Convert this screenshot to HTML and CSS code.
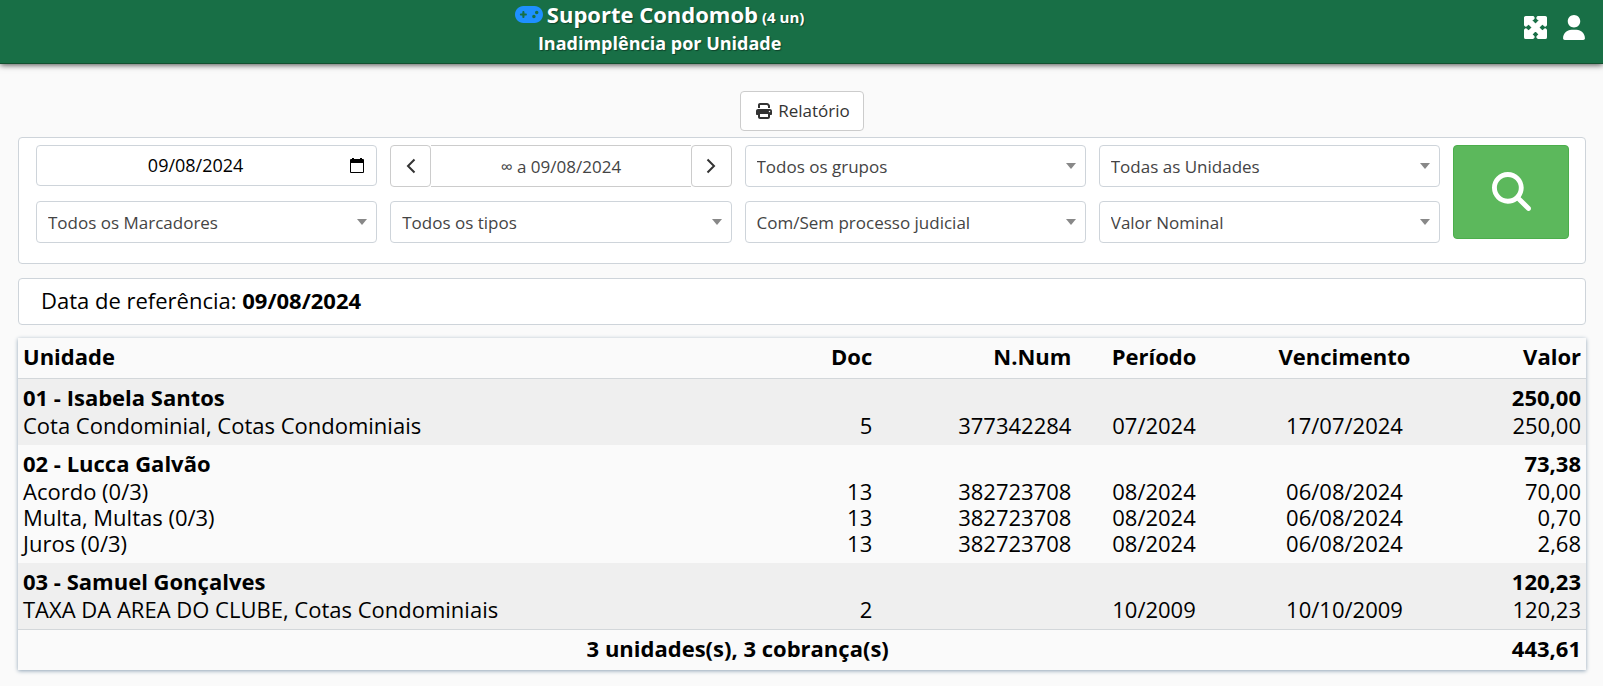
FILE: index.html
```html
<!DOCTYPE html>
<html lang="pt-BR">
<head>
<meta charset="utf-8">
<title>Inadimplência por Unidade</title>
<link rel="stylesheet" href="styles.css">
</head>
<body>
<header class="topbar">
  <div class="topbar-title">
    <h1 class="title">
      <svg class="icon-gamepad" viewBox="0 64 640 384" aria-hidden="true"><path d="M192 64C86 64 0 150 0 256S86 448 192 448H448c106 0 192-86 192-192s-86-192-192-192H192zM496 168a40 40 0 1 1 0 80 40 40 0 1 1 0-80zM392 304a40 40 0 1 1 80 0 40 40 0 1 1 -80 0zM168 200c0-13.3 10.7-24 24-24s24 10.7 24 24v32h32c13.3 0 24 10.7 24 24s-10.7 24-24 24H216v32c0 13.3-10.7 24-24 24s-24-10.7-24-24V280H136c-13.3 0-24-10.7-24-24s10.7-24 24-24h32V200z"/></svg>
      Suporte Condomob <small class="title-count">(4 un)</small>
    </h1>
    <h2 class="subtitle">Inadimplência por Unidade</h2>
  </div>
  <nav class="topbar-actions">
    <button class="icon-button" type="button" aria-label="Tela cheia">
      <svg class="icon-expand" viewBox="18 18 476 476"><path d="M200 32H56C42.7 32 32 42.7 32 56V200c0 9.7 5.800 18.500 14.800 22.200s19.300 1.700 26.200-5.200l40-40 79 79-79 79L73 295c-6.900-6.900-17.200-8.900-26.200-5.200S32 302.300 32 312V456c0 13.300 10.700 24 24 24H200c9.700 0 18.500-5.800 22.200-14.800s1.700-19.300-5.200-26.200l-40-40 79-79 79 79-40 40c-6.900 6.900-8.900 17.200-5.200 26.200s12.500 14.800 22.200 14.800H456c13.300 0 24-10.700 24-24V312c0-9.700-5.800-18.500-14.800-22.200s-19.300-1.700-26.200 5.200l-40 40-79-79 79-79 40 40c6.900 6.900 17.200 8.900 26.200 5.200s14.800-12.500 14.800-22.200V56c0-13.300-10.700-24-24-24H312c-9.700 0-18.500 5.800-22.200 14.800s-1.700 19.300 5.200 26.200l40 40-79 79-79-79 40-40c6.900-6.900 8.900-17.200 5.200-26.200S209.700 32 200 32z"/></svg>
    </button>
    <button class="icon-button" type="button" aria-label="Usuário">
      <svg class="icon-user" viewBox="0 0 448 512"><path d="M224 256c70.700 0 128-57.310 128-128s-57.300-128-128-128C153.300 0 96 57.310 96 128S153.300 256 224 256zM274.700 304H173.300C77.610 304 0 381.600 0 477.300c0 19.140 15.520 34.670 34.660 34.670h378.700C432.500 512 448 496.500 448 477.300C448 381.600 370.400 304 274.700 304z"/></svg>
    </button>
  </nav>
</header>
<main class="content">
  <div class="toolbar">
    <button class="report-button" type="button">
      <svg class="icon-print" viewBox="0 0 512 512" aria-hidden="true"><path d="M128 0C92.7 0 64 28.7 64 64v96h64V64H354.7L384 93.3V160h64V93.3c0-17-6.7-33.3-18.7-45.3L400 18.7C388 6.7 371.7 0 354.7 0H128zM384 352v32 64H128V384 368 352H384zm64 32h32c17.700 0 32-14.300 32-32V256c0-35.300-28.700-64-64-64H64c-35.300 0-64 28.700-64 64v96c0 17.700 14.300 32 32 32H64v64c0 35.300 28.700 64 64 64H384c35.300 0 64-28.700 64-64V384zM432 248a24 24 0 1 1 0 48 24 24 0 1 1 0-48z"/></svg>
      Relatório
    </button>
  </div>
  <form class="panel filters">
    <div class="filter-grid">
      <div class="field date-field">
        <input class="date-input" type="text" value="09/08/2024" aria-label="Data de referência">
        <button class="date-button" type="button" aria-label="Abrir calendário">
          <svg class="icon-calendar" viewBox="0 0 14 15"><path fill-rule="evenodd" d="M2 0h2v1h6V0h2v1h1a1 1 0 0 1 1 1v12a1 1 0 0 1-1 1H1a1 1 0 0 1-1-1V2a1 1 0 0 1 1-1h1zM1 5v9h12V5z"/></svg>
        </button>
      </div>
      <div class="period">
        <button class="period-step" type="button" aria-label="Período anterior"><svg class="icon-chevron" viewBox="0 0 10 16"><path d="M8.500 1.500L2 8l6.500 6.500"/></svg></button>
        <button class="period-value" type="button">∞ a 09/08/2024</button>
        <button class="period-step" type="button" aria-label="Próximo período"><svg class="icon-chevron" viewBox="0 0 10 16"><path d="M1.500 1.500L8 8l-6.500 6.500"/></svg></button>
      </div>
      <div class="field select-field"><select class="select" aria-label="Grupos"><option>Todos os grupos</option></select></div>
      <div class="field select-field"><select class="select" aria-label="Unidades"><option>Todas as Unidades</option></select></div>
      <div class="field select-field"><select class="select" aria-label="Marcadores"><option>Todos os Marcadores</option></select></div>
      <div class="field select-field"><select class="select" aria-label="Tipos"><option>Todos os tipos</option></select></div>
      <div class="field select-field"><select class="select" aria-label="Processo judicial"><option>Com/Sem processo judicial</option></select></div>
      <div class="field select-field"><select class="select" aria-label="Valor"><option>Valor Nominal</option></select></div>
    </div>
    <button class="search-button" type="submit" aria-label="Pesquisar">
      <svg class="icon-search" viewBox="0 0 512 512"><path d="M416 208c0 45.900-14.900 88.300-40 122.700L502.600 457.400c12.500 12.500 12.500 32.800 0 45.300s-32.800 12.500-45.300 0L330.700 376c-34.400 25.200-76.800 40-122.700 40C93.100 416 0 322.900 0 208S93.100 0 208 0S416 93.100 416 208zM208 352a144 144 0 1 0 0-288 144 144 0 1 0 0 288z"/></svg>
    </button>
  </form>
  <p class="panel reference">Data de referência: <strong>09/08/2024</strong></p>
  <table class="report">
    <colgroup><col class="col-unit"><col class="col-doc"><col class="col-num"><col class="col-period"><col class="col-due"><col class="col-value"></colgroup>
    <thead>
      <tr><th class="left">Unidade</th><th>Doc</th><th>N.Num</th><th class="center">Período</th><th class="center">Vencimento</th><th>Valor</th></tr>
    </thead>
    <tbody class="unit">
      <tr class="unit-head"><th class="left" colspan="5">01 - Isabela Santos</th><th>250,00</th></tr>
      <tr><td class="left">Cota Condominial, Cotas Condominiais</td><td>5</td><td>377342284</td><td class="center">07/2024</td><td class="center">17/07/2024</td><td>250,00</td></tr>
    </tbody>
    <tbody class="unit">
      <tr class="unit-head"><th class="left" colspan="5">02 - Lucca Galvão</th><th>73,38</th></tr>
      <tr><td class="left">Acordo (0/3)</td><td>13</td><td>382723708</td><td class="center">08/2024</td><td class="center">06/08/2024</td><td>70,00</td></tr>
      <tr><td class="left">Multa, Multas (0/3)</td><td>13</td><td>382723708</td><td class="center">08/2024</td><td class="center">06/08/2024</td><td>0,70</td></tr>
      <tr><td class="left">Juros (0/3)</td><td>13</td><td>382723708</td><td class="center">08/2024</td><td class="center">06/08/2024</td><td>2,68</td></tr>
    </tbody>
    <tbody class="unit">
      <tr class="unit-head"><th class="left" colspan="5">03 - Samuel Gonçalves</th><th>120,23</th></tr>
      <tr><td class="left">TAXA DA AREA DO CLUBE, Cotas Condominiais</td><td>2</td><td></td><td class="center">10/2009</td><td class="center">10/10/2009</td><td>120,23</td></tr>
    </tbody>
    <tfoot>
      <tr><th class="center" colspan="5">3 unidades(s), 3 cobrança(s)</th><th>443,61</th></tr>
    </tfoot>
  </table>
</main>
</body>
</html>
```

FILE: styles.css
```css
* {
  box-sizing: border-box;
}

body {
  margin: 0;
  background: #fafafa;
  color: #000;
  font-family: "Open Sans", sans-serif;
  font-size: 22px;
  line-height: 26px;
}

button,
input,
select {
  margin: 0;
  padding: 0;
  font-family: inherit;
  font-size: 17px;
  line-height: 24px;
}

button {
  cursor: pointer;
}

svg {
  display: block;
  fill: currentColor;
}

.topbar {
  display: flex;
  height: 64px;
  background: #186f46;
  border-bottom: 1px solid #12502f;
  box-shadow: 0 1px 6px rgba(0, 0, 0, 0.7);
  color: #fff;
}

.topbar-title {
  flex: 0 0 82.3%;
  text-align: center;
  text-shadow: 1px 1px 1px rgba(0, 0, 0, 0.4);
}

.title {
  display: flex;
  justify-content: center;
  align-items: baseline;
  gap: 4px;
  margin: 0;
  font-size: 22px;
  line-height: 28px;
}

.title-count {
  font-size: 15px;
}

.subtitle {
  margin: 0;
  font-size: 18px;
  line-height: 24px;
}

.icon-gamepad {
  width: 28px;
  height: 17px;
  color: #1e90ff;
}

.topbar-actions {
  flex: 1;
  display: flex;
  justify-content: flex-end;
  align-items: center;
  gap: 16px;
  padding: 0 18px 8px 0;
}

.icon-button {
  border: 0;
  background: none;
  color: #fff;
}

.icon-expand {
  width: 23px;
  height: 23px;
  stroke: currentColor;
  stroke-width: 28px;
}

.icon-user {
  width: 22px;
  height: 25px;
}

.content {
  padding: 27px 17px 16px 18px;
}

.toolbar {
  display: flex;
  justify-content: center;
  margin-bottom: 6px;
}

.report-button {
  display: flex;
  align-items: center;
  gap: 6px;
  height: 40px;
  padding: 0 13px 0 15px;
  border: 1px solid #ccc;
  border-radius: 4px;
  background: #fff;
  color: #333;
}

.icon-print {
  width: 16px;
  height: 16px;
}

.panel {
  margin: 0 0 14px;
  border: 1px solid #ced4da;
  border-radius: 4px;
  background: #fff;
}

.filters {
  display: flex;
  align-items: flex-start;
  gap: 13px;
  padding: 7px 16px 20px 17px;
}

.filter-grid {
  flex: 1;
  display: grid;
  grid-template-columns: repeat(4, 1fr);
  gap: 14px 13px;
}

.field,
.period {
  display: flex;
  height: 42px;
}

.field {
  position: relative;
  border: 1px solid #ced4da;
  border-radius: 4px;
  background: #fff;
}

.date-field {
  height: 41px;
  align-items: center;
  padding: 0 12px;
}

.date-input {
  flex: 1;
  min-width: 0;
  padding: 0 8px 2px 0;
  border: 0;
  background: none;
  color: #000;
  font-size: 18px;
  text-align: center;
}

.date-button {
  border: 0;
  background: none;
  color: #000;
}

.icon-calendar {
  width: 14px;
  height: 15px;
}

.period-step,
.period-value {
  border: 1px solid #ccc;
  background: #fff;
  color: #444;
}

.period-step {
  display: flex;
  align-items: center;
  justify-content: center;
  width: 41px;
  border-radius: 4px;
}

.period-value {
  flex: 1;
  padding-top: 2px;
  border-width: 1px 0;
}

.icon-chevron {
  width: 10px;
  height: 16px;
  fill: none;
  stroke: #333;
  stroke-width: 2;
}

.select {
  flex: 1;
  min-width: 0;
  padding: 2px 30px 0 11px;
  border: 0;
  border-radius: 4px;
  background: none;
  color: #444;
  appearance: none;
}

.select-field::after {
  content: "";
  position: absolute;
  top: 17px;
  right: 9px;
  border: 5px solid transparent;
  border-top: 6px solid #888;
  border-bottom: 0;
  pointer-events: none;
}

.search-button {
  display: flex;
  align-items: center;
  justify-content: center;
  width: 116px;
  height: 94px;
  padding-bottom: 2px;
  border: 1px solid #4cae4c;
  border-radius: 4px;
  background: #5cb85c;
  color: #fff;
}

.icon-search {
  width: 39px;
  height: 39px;
}

.reference {
  padding: 8px 22px 11px;
  margin-bottom: 13px;
}

.report {
  width: 100%;
  table-layout: fixed;
  border-collapse: collapse;
  box-shadow: 0 1px 4px #8fa3b5;
  background: #fafafa;
}

.col-unit { width: 49.1%; }
.col-doc { width: 5.7%; }
.col-num { width: 12.7%; }
.col-period { width: 9.9%; }
.col-due { width: 14.4%; }
.col-value { width: 8.2%; }

.report th,
.report td {
  padding: 0 5px;
  text-align: right;
  white-space: nowrap;
}

.report .left {
  text-align: left;
}

.report .center {
  text-align: center;
}

.report thead th,
.report tfoot th {
  padding: 5px 5px 9px;
}

.report thead {
  border-bottom: 1px solid #d3d7da;
}

.report tfoot {
  border-top: 1px solid #d3d7da;
}

.unit:nth-of-type(odd) {
  background: #efefef;
}

.report .unit-head th {
  padding-top: 5px;
  padding-bottom: 2px;
}

.report .unit tr:last-child td {
  padding-bottom: 7px;
}
```
